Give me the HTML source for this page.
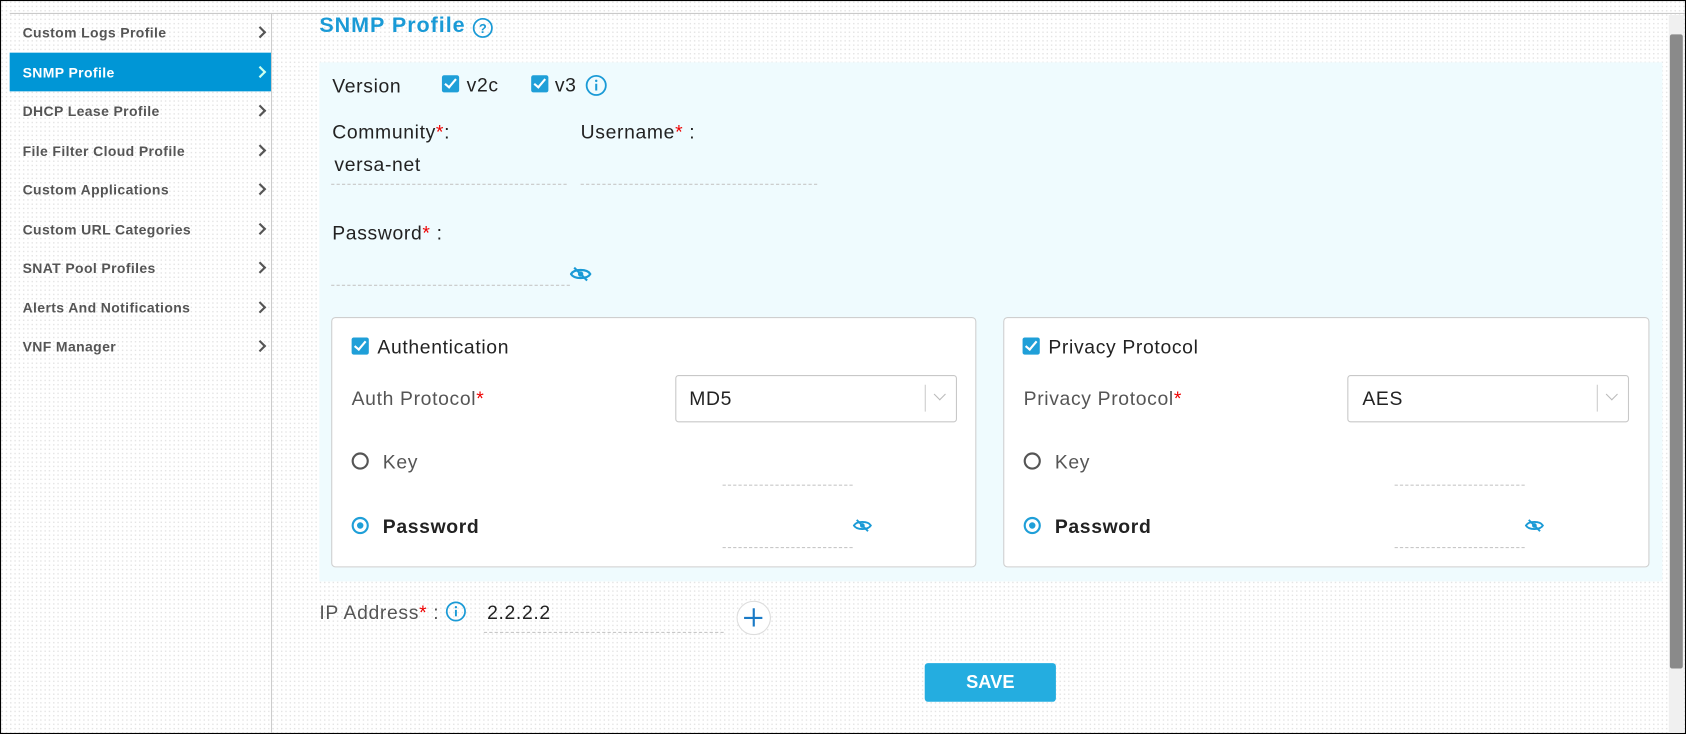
<!DOCTYPE html>
<html><head><meta charset="utf-8"><style>
html,body{margin:0;padding:0;width:1686px;height:734px;overflow:hidden;background:#fff}
#w{position:absolute;left:0;top:0;width:1568px;height:683px;transform:scale(1.07526,1.07467);transform-origin:0 0;font-family:"Liberation Sans",sans-serif;
background:#fff radial-gradient(circle,#e4e4e4 0.6px,transparent 0.9px) 0 0/4px 4px;}
.a{position:absolute}
.frame{left:0;top:0;width:1566px;height:681px;border:1px solid #000;}
.side{font-size:13px;font-weight:bold;color:#555;left:21px;letter-spacing:0.35px}
.chev{position:absolute;left:238px;width:6px;height:6px;border-right:2px solid #555;border-top:2px solid #555;transform:rotate(45deg)}
.lbl{font-size:18px;color:#222;letter-spacing:0.6px}
.g{color:#555}
.st{color:#e00}
.ul{position:absolute;height:0;border-top:1px dashed #c8c8c8}
.cb{position:absolute;width:16px;height:16px;background:#1f9fd8;border-radius:2px}
.cb:after{content:"";position:absolute;left:5px;top:1px;width:4px;height:9px;border-right:2px solid #fff;border-bottom:2px solid #fff;transform:rotate(40deg)}
.box{position:absolute;background:#fff;border:1px solid #cfcfcf;border-radius:4px}
.sel{position:absolute;border:1px solid #c8c8c8;border-radius:3px;background:#fff}
.rad{position:absolute;width:12px;height:12px;border:2px solid #555;border-radius:50%}
.rad.on{border-color:#1f9fd8}
.rad.on:after{content:"";position:absolute;left:3px;top:3px;width:6px;height:6px;border-radius:50%;background:#1f9fd8}
</style></head><body><div id="w">
<div class="a frame"></div>
<div class="a" style="left:9px;top:12px;width:1558px;border-top:1px solid #c8c8c8"></div>
<div class="a" style="left:252px;top:13px;height:669px;border-left:1px solid #ccc"></div>
<div class="a" style="left:9px;top:49px;width:243px;height:36px;background:#0096d6"></div>
<div class="a side" style="top:23px">Custom Logs Profile</div><div class="chev" style="top:26px"></div>
<div class="a side" style="top:60px;color:#fff">SNMP Profile</div><div class="chev" style="top:63px;border-color:#cfe;"></div>
<div class="a side" style="top:96px">DHCP Lease Profile</div><div class="chev" style="top:99px"></div>
<div class="a side" style="top:133px">File Filter Cloud Profile</div><div class="chev" style="top:136px"></div>
<div class="a side" style="top:169px">Custom Applications</div><div class="chev" style="top:172px"></div>
<div class="a side" style="top:206px">Custom URL Categories</div><div class="chev" style="top:209px"></div>
<div class="a side" style="top:242px">SNAT Pool Profiles</div><div class="chev" style="top:245px"></div>
<div class="a side" style="top:279px">Alerts And Notifications</div><div class="chev" style="top:282px"></div>
<div class="a side" style="top:315px">VNF Manager</div><div class="chev" style="top:318px"></div>

<div class="a" style="left:297px;top:13px;font-size:20px;font-weight:bold;color:#1a9ad6;letter-spacing:0.9px">SNMP Profile</div>
<svg class="a" style="left:439px;top:16px" width="20" height="20" viewBox="0 0 20 20"><circle cx="10" cy="10" r="8.5" fill="none" stroke="#1a9ad6" stroke-width="1.6"/><text x="10" y="14.5" font-size="12" font-weight="bold" text-anchor="middle" fill="#1a9ad6" font-family="Liberation Sans">?</text></svg>

<div class="a" style="left:297px;top:58px;width:1249px;height:483px;background:#effbfe"></div>
<div class="a lbl" style="left:309px;top:70px">Version</div>
<div class="cb" style="left:411px;top:70px"></div><div class="a lbl" style="left:434px;top:69px">v2c</div>
<div class="cb" style="left:494px;top:70px"></div><div class="a lbl" style="left:516px;top:69px">v3</div>
<svg class="a" style="left:544px;top:69px" width="21" height="21" viewBox="0 0 20 20"><circle cx="10" cy="10" r="8.5" fill="none" stroke="#1a9ad6" stroke-width="1.6"/><rect x="9.1" y="8.5" width="1.8" height="6" fill="#1a9ad6"/><circle cx="10" cy="6" r="1.1" fill="#1a9ad6"/></svg>
<div class="a lbl" style="left:309px;top:113px">Community<span class="st">*</span>:</div>
<div class="a lbl" style="left:311px;top:143px">versa-net</div>
<div class="ul" style="left:308px;top:171px;width:219px"></div>
<div class="a lbl" style="left:540px;top:113px">Username<span class="st">*</span> :</div>
<div class="ul" style="left:540px;top:171px;width:220px"></div>
<div class="a lbl" style="left:309px;top:207px">Password<span class="st">*</span> :</div>
<div class="ul" style="left:308px;top:265px;width:222px"></div>
<svg class="a" style="left:530px;top:247px" width="20" height="16" viewBox="0 0 20 16"><path d="M1 8C4 3 16 3 19 8C16 13 4 13 1 8Z" fill="none" stroke="#1a9ad6" stroke-width="2"/><circle cx="10" cy="8" r="2.5" fill="#1a9ad6"/><path d="M4 2L16 14" stroke="#1a9ad6" stroke-width="2"/></svg>

<div class="box" style="left:308px;top:295px;width:598px;height:231px"></div>
<div class="cb" style="left:327px;top:314px"></div><div class="a lbl" style="left:351px;top:313px">Authentication</div>
<div class="a lbl g" style="left:327px;top:361px">Auth Protocol<span class="st">*</span></div>
<div class="sel" style="left:628px;top:349px;width:260px;height:42px"></div>
<div class="a lbl" style="left:641px;top:361px">MD5</div>
<div class="a" style="left:860px;top:358px;height:25px;border-left:1px solid #ccc"></div>
<div class="a" style="left:870px;top:363px;width:7px;height:7px;border-right:1.5px solid #bbb;border-bottom:1.5px solid #bbb;transform:rotate(45deg)"></div>
<div class="rad" style="left:327px;top:421px"></div><div class="a lbl g" style="left:356px;top:420px">Key</div>
<div class="ul" style="left:672px;top:451px;width:121px"></div>
<div class="rad on" style="left:327px;top:481px"></div><div class="a lbl" style="left:356px;top:480px;font-weight:bold">Password</div>
<div class="ul" style="left:672px;top:509px;width:121px"></div>
<svg class="a" style="left:793px;top:482px" width="18" height="14" viewBox="0 0 20 16"><path d="M1 8C4 3 16 3 19 8C16 13 4 13 1 8Z" fill="none" stroke="#1a9ad6" stroke-width="2"/><circle cx="10" cy="8" r="2.5" fill="#1a9ad6"/><path d="M4 2L16 14" stroke="#1a9ad6" stroke-width="2"/></svg>

<div class="box" style="left:933px;top:295px;width:599px;height:231px"></div>
<div class="cb" style="left:951px;top:314px"></div><div class="a lbl" style="left:975px;top:313px">Privacy Protocol</div>
<div class="a lbl g" style="left:952px;top:361px">Privacy Protocol<span class="st">*</span></div>
<div class="sel" style="left:1253px;top:349px;width:260px;height:42px"></div>
<div class="a lbl" style="left:1267px;top:361px">AES</div>
<div class="a" style="left:1485px;top:358px;height:25px;border-left:1px solid #ccc"></div>
<div class="a" style="left:1495px;top:363px;width:7px;height:7px;border-right:1.5px solid #bbb;border-bottom:1.5px solid #bbb;transform:rotate(45deg)"></div>
<div class="rad" style="left:952px;top:421px"></div><div class="a lbl g" style="left:981px;top:420px">Key</div>
<div class="ul" style="left:1297px;top:451px;width:121px"></div>
<div class="rad on" style="left:952px;top:481px"></div><div class="a lbl" style="left:981px;top:480px;font-weight:bold">Password</div>
<div class="ul" style="left:1297px;top:509px;width:121px"></div>
<svg class="a" style="left:1418px;top:482px" width="18" height="14" viewBox="0 0 20 16"><path d="M1 8C4 3 16 3 19 8C16 13 4 13 1 8Z" fill="none" stroke="#1a9ad6" stroke-width="2"/><circle cx="10" cy="8" r="2.5" fill="#1a9ad6"/><path d="M4 2L16 14" stroke="#1a9ad6" stroke-width="2"/></svg>

<div class="a lbl g" style="left:297px;top:560px">IP Address<span class="st">*</span> :</div>
<svg class="a" style="left:414px;top:559px" width="20" height="20" viewBox="0 0 20 20"><circle cx="10" cy="10" r="8.5" fill="none" stroke="#1a9ad6" stroke-width="1.6"/><rect x="9.1" y="8.5" width="1.8" height="6" fill="#1a9ad6"/><circle cx="10" cy="6" r="1.1" fill="#1a9ad6"/></svg>
<div class="a lbl" style="left:453px;top:560px">2.2.2.2</div>
<div class="ul" style="left:450px;top:588px;width:223px"></div>
<div class="a" style="left:685px;top:559px;width:30px;height:30px;border:1px solid #ddd;border-radius:50%;background:#fff"></div>
<div class="a" style="left:692px;top:574px;width:17px;border-top:2px solid #1a7ac6"></div>
<div class="a" style="left:700px;top:566px;height:17px;border-left:2px solid #1a7ac6"></div>

<div class="a" style="left:860px;top:617px;width:122px;height:36px;background:#24ade0;border-radius:3px;color:#fff;font-weight:bold;font-size:17px;text-align:center;line-height:36px">SAVE</div>

<div class="a" style="left:1552px;top:14px;width:14px;height:668px;background:#f0f0f0"></div>
<div class="a" style="left:1553px;top:32px;width:12px;height:590px;background:#8a8a8a;border-radius:2px"></div>
</div></body></html>
